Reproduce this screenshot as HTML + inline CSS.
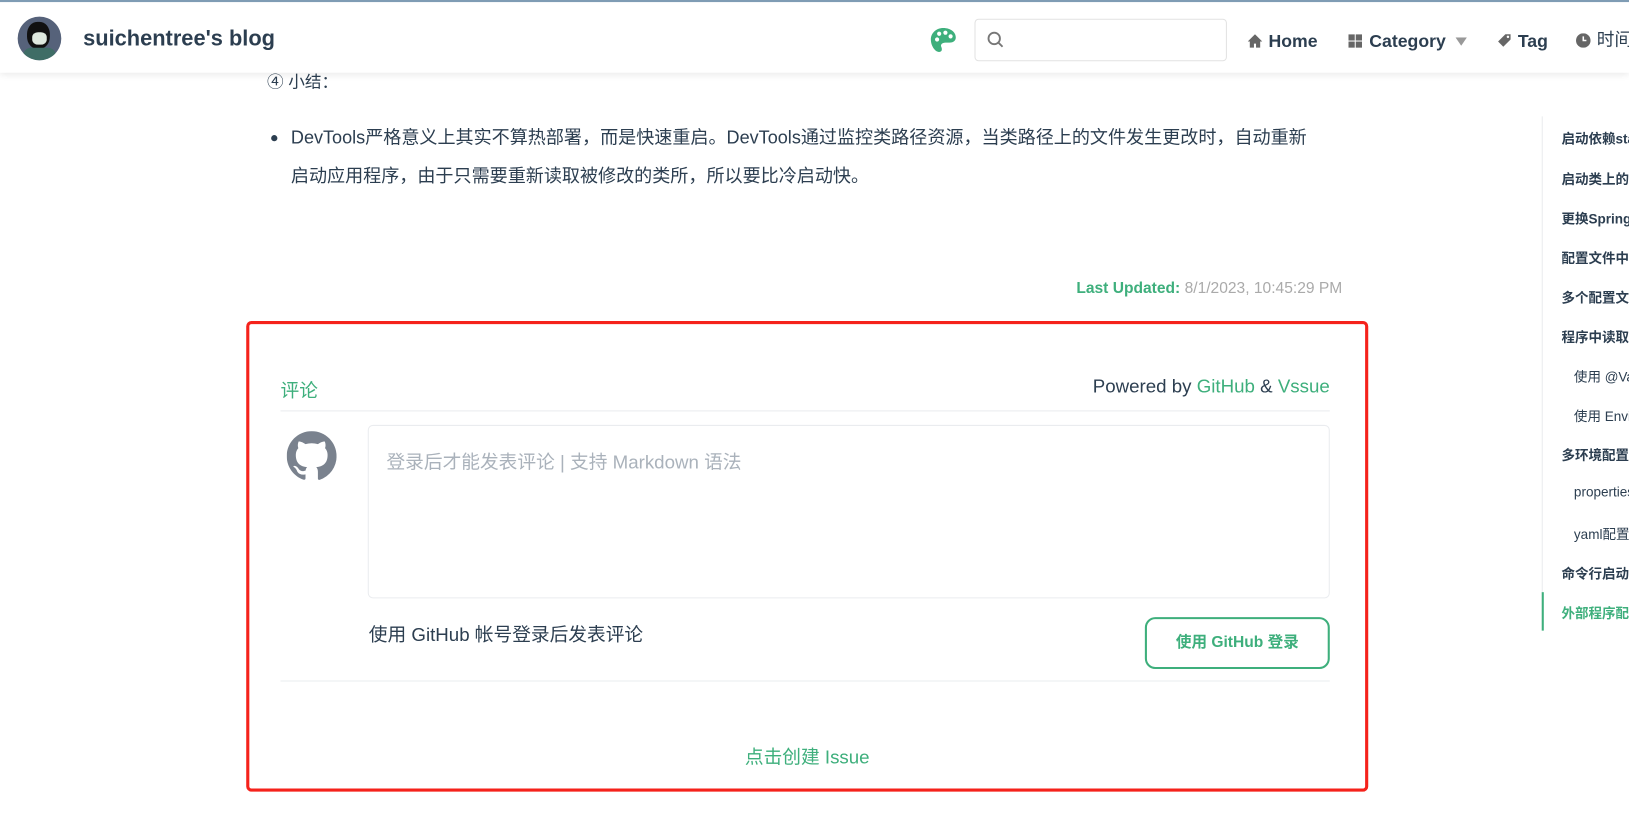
<!DOCTYPE html>
<html><head><meta charset="utf-8"><style>
*{margin:0;padding:0;box-sizing:border-box}
html,body{width:1629px;height:817px;overflow:hidden;background:#fff}
body{font-family:"Liberation Sans","Noto Sans CJK SC",sans-serif;color:#2c3e50;position:relative}
#w{position:absolute;left:0;top:0;width:1568px;height:787px;transform:scale(1.0389);transform-origin:0 0}
.abs{position:absolute}
.hdr{left:0;top:0;width:1568px;height:70px;background:#fff;border-top:2px solid #7f9cb4;box-shadow:0 2px 6px rgba(0,0,0,.08);z-index:5}
.g{color:#3eaf7c}
.toc div{position:absolute;font-size:13px;font-weight:bold;color:#2c3e50;white-space:nowrap}
.toc div.s{font-weight:normal;left:1515px}
</style></head><body><div id="w">
<div class="abs hdr">
  <div class="abs" style="left:17px;top:14px;width:42px;height:42px;border-radius:50%;background:#56627a;overflow:hidden">
    <div class="abs" style="left:9px;top:5px;width:22px;height:26px;border-radius:45%;background:#111"></div>
    <div class="abs" style="left:14px;top:15px;width:14px;height:12px;border-radius:40%;background:#dfe9df"></div>
    <div class="abs" style="left:5px;top:30px;width:32px;height:16px;border-radius:8px 8px 0 0;background:#3f6d66"></div>
  </div>
  <div class="abs" style="left:80px;top:24px;font-size:21px;font-weight:bold;color:#2c3e50">suichentree's blog</div>
  <svg class="abs" style="left:895px;top:24px" width="26" height="26" viewBox="0 0 26 26"><path d="M13 1C6 1 1 6 1 12c0 6 4 12 8 12 3 0 3-3 2-5s1-4 4-4h4c4 0 6-2 6-5C25 5 20 1 13 1z" fill="#3eaf7c"/><circle cx="7" cy="12" r="2" fill="#fff"/><circle cx="9" cy="6.5" r="2" fill="#fff"/><circle cx="15" cy="5.5" r="2" fill="#fff"/><circle cx="20" cy="9" r="2" fill="#fff"/></svg>
  <div class="abs" style="left:938px;top:16px;width:243px;height:41px;border:1px solid #e2e2e2;border-radius:4px"></div>
  <svg class="abs" style="left:950px;top:28px" width="16" height="16" viewBox="0 0 16 16"><circle cx="7" cy="7" r="5.5" fill="none" stroke="#777" stroke-width="1.8"/><path d="M11 11l4 4" stroke="#777" stroke-width="1.8"/></svg>
  <svg class="abs" style="left:1201px;top:31px" width="14" height="13" viewBox="0 0 14 13"><path d="M7 0L0 7h2v6h4V9h2v4h4V7h2z" fill="#666"/></svg>
  <div class="abs" style="left:1221px;top:28px;font-size:17px;font-weight:bold;color:#2c3e50">Home</div>
  <svg class="abs" style="left:1298px;top:31px" width="13" height="13"><rect x="0" y="0" width="6" height="6" fill="#666"/><rect x="7" y="0" width="6" height="6" fill="#666"/><rect x="0" y="7" width="6" height="6" fill="#666"/><rect x="7" y="7" width="6" height="6" fill="#666"/></svg>
  <div class="abs" style="left:1318px;top:28px;font-size:17px;font-weight:bold;color:#2c3e50">Category</div>
  <svg class="abs" style="left:1401px;top:34px" width="11" height="8"><path d="M0 0h11L5.5 8z" fill="#999"/></svg>
  <svg class="abs" style="left:1441px;top:30px" width="14" height="14" viewBox="0 0 14 14"><path d="M8 1h5v5l-7 7-5-5z" fill="#666"/><circle cx="10.5" cy="3.5" r="1.2" fill="#fff"/></svg>
  <div class="abs" style="left:1461px;top:28px;font-size:17px;font-weight:bold;color:#2c3e50">Tag</div>
  <svg class="abs" style="left:1517px;top:30px" width="14" height="14"><circle cx="7" cy="7" r="7" fill="#666"/><path d="M7 3v4h3" stroke="#fff" stroke-width="1.5" fill="none"/></svg>
  <div class="abs" style="left:1537px;top:26px;font-size:17px;color:#2c3e50;line-height:22px;white-space:nowrap">时间线</div>
</div>
<div class="abs" style="left:257px;top:65px;font-size:16px;color:#2c3e50">④ 小结：</div>
<div class="abs" style="left:261px;top:130px;width:6px;height:6px;border-radius:50%;background:#2c3e50"></div>
<div class="abs" style="left:280px;top:114px;width:990px;font-size:17.4px;line-height:37px;color:#2c3e50">DevTools严格意义上其实不算热部署，而是快速重启。DevTools通过监控类路径资源，当类路径上的文件发生更改时，自动重新启动应用程序，由于只需要重新读取被修改的类所，所以要比冷启动快。</div>
<div class="abs" style="right:276px;top:269px;font-size:15px;color:#aaa;white-space:nowrap"><b class="g">Last Updated:</b> 8/1/2023, 10:45:29 PM</div>
<div class="abs" style="left:237px;top:309px;width:1080px;height:453px;border:3px solid #f5221b;border-radius:5px"></div>
<div class="abs g" style="left:270px;top:362px;font-size:18px">评论</div>
<div class="abs" style="right:288px;top:362px;font-size:18px;color:#2c3e50;white-space:nowrap">Powered by <span class="g">GitHub</span> &amp; <span class="g">Vssue</span></div>
<div class="abs" style="left:270px;top:395px;width:1010px;height:1px;background:#eaecef"></div>
<svg class="abs" style="left:276px;top:415px" width="48" height="48" viewBox="0 0 16 16"><path fill="#7a828e" d="M8 0C3.58 0 0 3.58 0 8c0 3.54 2.29 6.53 5.47 7.59.4.07.55-.17.55-.38v-1.34c-2.23.48-2.7-1.07-2.7-1.07-.36-.93-.89-1.17-.89-1.17-.73-.5.06-.49.06-.49.8.06 1.23.82 1.23.82.72 1.23 1.87.87 2.33.67.07-.52.28-.87.51-1.07-1.78-.2-3.65-.89-3.65-3.95 0-.87.31-1.59.82-2.150-.08-.2-.36-1.02.08-2.12 0 0 .67-.21 2.2.82a7.6 7.6 0 014 0c1.53-1.04 2.2-.82 2.2-.82.44 1.1.16 1.92.08 2.12.51.56.82 1.27.82 2.15 0 3.07-1.87 3.75-3.65 3.95.29.25.54.73.54 1.48v2.2c0 .21.15.46.55.38A8.01 8.01 0 0016 8c0-4.42-3.58-8-8-8z"/></svg>
<div class="abs" style="left:354px;top:409px;width:926px;height:167px;border:1px solid #eaecef;border-radius:5px"></div>
<div class="abs" style="left:372px;top:431px;font-size:18px;color:#aab2bb">登录后才能发表评论 | 支持 Markdown 语法</div>
<div class="abs" style="left:355px;top:597px;font-size:18px;color:#2c3e50">使用 GitHub 帐号登录后发表评论</div>
<div class="abs g" style="left:1102px;top:594px;width:178px;height:50px;border:2px solid #3eaf7c;border-radius:10px;font-size:15px;font-weight:bold;text-align:center;line-height:46px">使用 GitHub 登录</div>
<div class="abs" style="left:270px;top:655px;width:1010px;height:1px;background:#eaecef"></div>
<div class="abs g" style="left:237px;width:1080px;top:715px;text-align:center;font-size:18px">点击创建 Issue</div>
<div class="abs" style="left:1484px;top:112px;width:1px;height:495px;background:#eaecef"></div>
<div class="abs" style="left:1484px;top:570px;width:2px;height:37px;background:#3eaf7c"></div>
<div class="toc">
<div style="left:1503px;top:123px">启动依赖starter</div>
<div style="left:1503px;top:162px">启动类上的注解</div>
<div style="left:1503px;top:200px">更换Spring</div>
<div style="left:1503px;top:238px">配置文件中</div>
<div style="left:1503px;top:276px">多个配置文件</div>
<div style="left:1503px;top:314px">程序中读取</div>
<div class="s" style="top:352px">使用 @Value</div>
<div class="s" style="top:390px">使用 Environment</div>
<div style="left:1503px;top:428px">多环境配置</div>
<div class="s" style="top:466px">properties</div>
<div class="s" style="top:504px">yaml配置</div>
<div style="left:1503px;top:542px">命令行启动</div>
<div style="left:1503px;top:580px;color:#3eaf7c">外部程序配置</div>
</div>
</div></body></html>
